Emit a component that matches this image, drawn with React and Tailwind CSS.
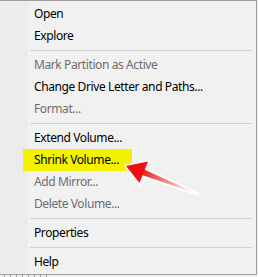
import React from "react";

const items = [
  { label: "Open" },
  { label: "Explore" },
  { sep: true },
  { label: "Mark Partition as Active", disabled: true },
  { label: "Change Drive Letter and Paths..." },
  { label: "Format...", disabled: true },
  { sep: true },
  { label: "Extend Volume..." },
  { label: "Shrink Volume...", marked: true },
  { label: "Add Mirror...", disabled: true },
  { label: "Delete Volume...", disabled: true },
  { sep: true },
  { label: "Properties" },
  { sep: true },
  { label: "Help" },
];

const Arrow = () => (
  <svg
    className="absolute left-0 top-0 pointer-events-none"
    width="258"
    height="277"
    viewBox="0 0 258 277"
  >
    <defs>
      <linearGradient id="tail" x1="140" y1="172" x2="198" y2="194" gradientUnits="userSpaceOnUse">
        <stop offset="0" stopColor="#f01010" />
        <stop offset="0.6" stopColor="#f36a6a" stopOpacity="0.6" />
        <stop offset="1" stopColor="#f7b0b0" stopOpacity="0" />
      </linearGradient>
    </defs>
    <path
      d="M126 166 L149 161 L143 168 L198 194 L139 175 L140 184 Z"
      fill="#ffffff"
      stroke="#ffffff"
      strokeWidth="3"
      strokeLinejoin="round"
    />
    <path d="M141 168 L198 194 L139 174 Z" fill="url(#tail)" />
    <path d="M126 166 L148 161.5 L139.5 183 Z" fill="#ee1111" />
  </svg>
);

export default function App() {
  return (
    <div
      className="relative w-[258px] h-[277px] overflow-hidden bg-[#f0f0f0] text-[12px] tracking-[-0.4px] text-black"
      style={{ fontFamily: '"Noto Sans", "Open Sans", sans-serif' }}
    >
      <div className="w-[257px] h-[275px] border-t border-r border-b border-[#a0a0a0] bg-[linear-gradient(to_right,#ececec_0,#ececec_28px,#f1f1f1_28px)] pt-[2px]">
        {items.map((it, i) =>
          it.sep ? (
            <div key={i} className="h-[7px] flex items-center pl-[30px] pr-[4px]">
              <div className="h-px w-full bg-[#d2d2d2]" />
            </div>
          ) : it.marked ? (
            <div key={i} className="h-[22px] flex items-stretch">
              <span className="ml-[23px] w-[109px] pl-[11px] flex items-center bg-[#f2f200]">
                {it.label}
              </span>
            </div>
          ) : (
            <div
              key={i}
              className={`h-[22px] flex items-center pl-[34px] ${it.disabled ? "text-[#6d6d6d]" : ""}`}
            >
              {it.label}
            </div>
          )
        )}
      </div>
      <div className="flex gap-[5px] pl-[4px]">
        {[0, 1, 2, 3, 4, 5, 6, 7].map((n) => (
          <div key={n} className="w-px h-[2px] bg-[#9a9a9a]" />
        ))}
      </div>
      <Arrow />
    </div>
  );
}
